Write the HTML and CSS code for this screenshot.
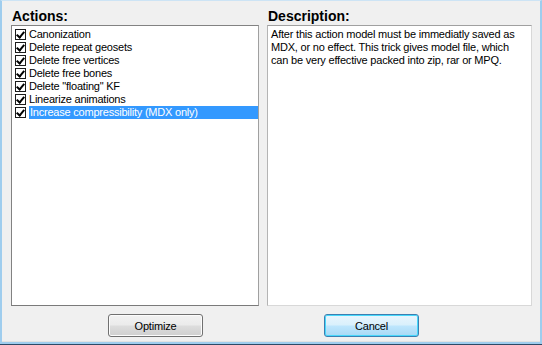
FILE: index.html
```html
<!DOCTYPE html>
<html lang="en">
<head>
    <meta charset="UTF-8">
    <title>Optimize</title>
    <link rel="stylesheet" href="styles.css">
</head>
<body>
    <div class="window">
        <div class="panels">
            <div class="panel actions">
                <div class="panel-title">Actions:</div>
                <ul class="listbox">
                    <li><span class="check"></span>Canonization</li>
                    <li><span class="check"></span>Delete repeat geosets</li>
                    <li><span class="check"></span>Delete free vertices</li>
                    <li><span class="check"></span>Delete free bones</li>
                    <li><span class="check"></span>Delete "floating" KF</li>
                    <li><span class="check"></span>Linearize animations</li>
                    <li class="selected"><span class="check"></span><span class="label">Increase compressibility (MDX only)</span></li>
                </ul>
            </div>
            <div class="panel description">
                <div class="panel-title">Description:</div>
                <div class="memo">After this action model must be immediatly saved as MDX, or no effect. This trick gives model file, which can be very effective packed into zip, rar or MPQ.</div>
            </div>
        </div>
        <div class="buttons">
            <button class="btn">Optimize</button>
            <button class="btn default">Cancel</button>
        </div>
    </div>
</body>
</html>
```

FILE: styles.css
```css
* {
    margin: 0;
    padding: 0;
    box-sizing: border-box;
}

body {
    font-family: 'Liberation Sans', Arial, sans-serif;
    font-size: 11px;
    color: #000;
    background: #f0f0f0;
}

.window {
    width: 542px;
    height: 345px;
    background: #f0f0f0;
    border-left: 2px solid #9fcdee;
    border-right: 2px solid #9fcdee;
    border-bottom: 3px solid #9fcdee;
    border-top: 1px solid #cde4f5;
    box-shadow: inset 0 -1px 0 #e2e2e2;
    padding: 7px 8px 0 9px;
    position: relative;
}

.window::after {
    content: "";
    position: absolute;
    left: -2px;
    right: -2px;
    bottom: -3px;
    height: 1px;
    background: #2c4a66;
}

.panels {
    display: flex;
    gap: 8px;
}

.panel-title {
    font-weight: bold;
    font-size: 14px;
    height: 17px;
    line-height: 16px;
    padding-left: 1px;
}

.actions {
    width: 248px;
}

.description {
    width: 265px;
}

.listbox {
    list-style: none;
    height: 281px;
    background: #fff;
    border: 1px solid #828282;
    border-right-color: #a0a0a0;
    border-bottom-color: #7a7a7a;
    padding: 2px 0 0 3px;
    letter-spacing: -0.22px;
}

.listbox li {
    display: flex;
    align-items: center;
    height: 13px;
    line-height: 13px;
    white-space: nowrap;
}

.check {
    width: 11px;
    height: 11px;
    border: 1px solid #1c1c1c;
    background: #fff;
    margin-right: 3px;
    flex: none;
    position: relative;
}

.check::after {
    content: "";
    position: absolute;
    left: 2px;
    top: 0px;
    width: 3px;
    height: 6px;
    border: solid #000;
    border-width: 0 2px 2px 0;
    transform: rotate(40deg);
}

.selected .label {
    flex: 1;
    background: #3399ff;
    color: #fff;
    padding-left: 1px;
}

.listbox li .label {
    height: 13px;
}

.memo {
    height: 281px;
    background: #fff;
    border: 1px solid #d8d8d8;
    border-top-color: #a0a0a0;
    border-left-color: #b4b4b4;
    padding: 2px 6px 0 3px;
    line-height: 13px;
    letter-spacing: -0.2px;
}

.buttons {
    display: flex;
    gap: 121px;
    padding: 8px 0 0 97px;
}

.btn {
    width: 95px;
    height: 23px;
    font-family: 'Liberation Sans', Arial, sans-serif;
    font-size: 11px;
    letter-spacing: -0.2px;
    color: #000;
    border: 1px solid #707070;
    border-radius: 3px;
    background: linear-gradient(#f2f2f2 0%, #ebebeb 48%, #dddddd 52%, #cfcfcf 100%);
    box-shadow: inset 0 0 0 1px #fcfcfc;
}

.btn.default {
    border-color: #3c7fb1;
    background: linear-gradient(#eaf6fd 0%, #d9f0fc 48%, #bee6fd 52%, #a7d9f5 100%);
    box-shadow: inset 0 0 0 1px #48d8fb;
}
```
